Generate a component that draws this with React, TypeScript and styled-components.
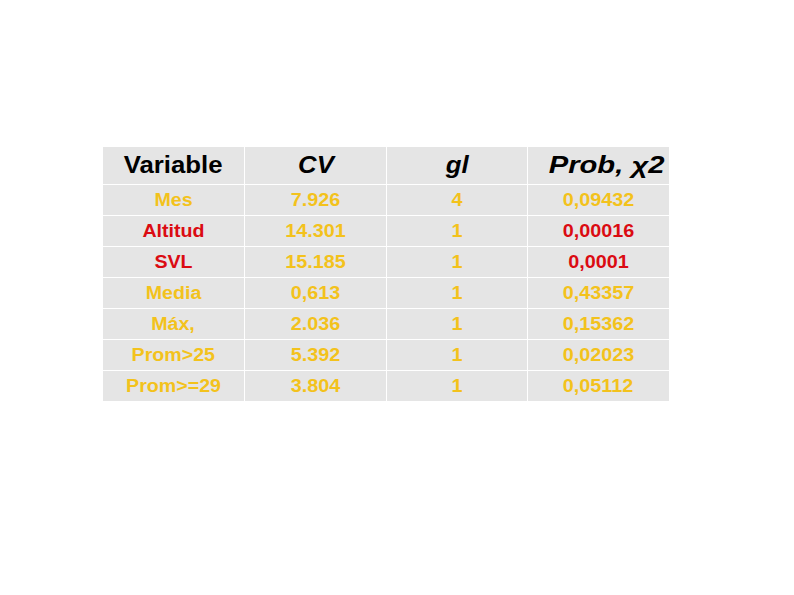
import { createGlobalStyle } from "styled-components";
import styled from "styled-components";

const GlobalStyle = createGlobalStyle`
    html, body {
        margin: 0;
        padding: 0;
        background: #ffffff;
    }
    body {
        font-family: "Liberation Sans", Arial, sans-serif;
    }
`;

type Tone = "yellow" | "red";

const toneColor: Record<Tone, string> = {
    yellow: "#f3c21c",
    red: "#db0b12",
};

interface Row {
    variable: string;
    variableTone: Tone;
    cv: string;
    gl: string;
    prob: string;
    probTone: Tone;
}

const rows: Row[] = [
    { variable: "Mes", variableTone: "yellow", cv: "7.926", gl: "4", prob: "0,09432", probTone: "yellow" },
    { variable: "Altitud", variableTone: "red", cv: "14.301", gl: "1", prob: "0,00016", probTone: "red" },
    { variable: "SVL", variableTone: "red", cv: "15.185", gl: "1", prob: "0,0001", probTone: "red" },
    { variable: "Media", variableTone: "yellow", cv: "0,613", gl: "1", prob: "0,43357", probTone: "yellow" },
    { variable: "Máx,", variableTone: "yellow", cv: "2.036", gl: "1", prob: "0,15362", probTone: "yellow" },
    { variable: "Prom>25", variableTone: "yellow", cv: "5.392", gl: "1", prob: "0,02023", probTone: "yellow" },
    { variable: "Prom>=29", variableTone: "yellow", cv: "3.804", gl: "1", prob: "0,05112", probTone: "yellow" },
];

const Page = styled.div`
    width: 794px;
    height: 595px;
    box-sizing: border-box;
    padding: 146px 0 0 102px;
`;

const Table = styled.div`
    display: grid;
    grid-template-columns: 141px 141px 140px 141px;
    grid-template-rows: 37px repeat(7, 30px);
    gap: 1px;
    width: max-content;
    background: #ffffff;
    border: 1px solid #ffffff;
`;

const HeaderCell = styled.div<{ $italic?: boolean; $shift?: number }>`
    display: flex;
    align-items: center;
    justify-content: center;
    background: #e5e5e5;
    color: #000000;
    font-size: 23px;
    font-weight: bold;
    font-style: ${(p) => (p.$italic ? "italic" : "normal")};
    padding-bottom: 1px;
    padding-left: ${(p) => p.$shift ?? 0}px;
`;

const Cell = styled.div<{ $tone: Tone }>`
    display: flex;
    align-items: center;
    justify-content: center;
    background: #e5e5e5;
    color: ${(p) => toneColor[p.$tone]};
    font-size: 18px;
    font-weight: bold;
    padding-top: 1px;
`;

// the slide text is rendered a little wider than plain Arial
const Wide = styled.span<{ $scale: number }>`
    display: inline-block;
    transform: scaleX(${(p) => p.$scale});
    white-space: nowrap;
`;

export default function App() {
    return (
        <>
            <GlobalStyle />
            <Page>
                <Table>
                    <HeaderCell><Wide $scale={1.12}>Variable</Wide></HeaderCell>
                    <HeaderCell $italic><Wide $scale={1.12}>CV</Wide></HeaderCell>
                    <HeaderCell $italic><Wide $scale={1.12}>gl</Wide></HeaderCell>
                    <HeaderCell $italic $shift={16}><Wide $scale={1.27}>Prob, χ2</Wide></HeaderCell>
                    {rows.map((r) => (
                        <>
                            <Cell key={r.variable + "v"} $tone={r.variableTone}><Wide $scale={1.09}>{r.variable}</Wide></Cell>
                            <Cell key={r.variable + "c"} $tone="yellow"><Wide $scale={1.1}>{r.cv}</Wide></Cell>
                            <Cell key={r.variable + "g"} $tone="yellow"><Wide $scale={1.1}>{r.gl}</Wide></Cell>
                            <Cell key={r.variable + "p"} $tone={r.probTone}><Wide $scale={1.1}>{r.prob}</Wide></Cell>
                        </>
                    ))}
                </Table>
            </Page>
        </>
    );
}
